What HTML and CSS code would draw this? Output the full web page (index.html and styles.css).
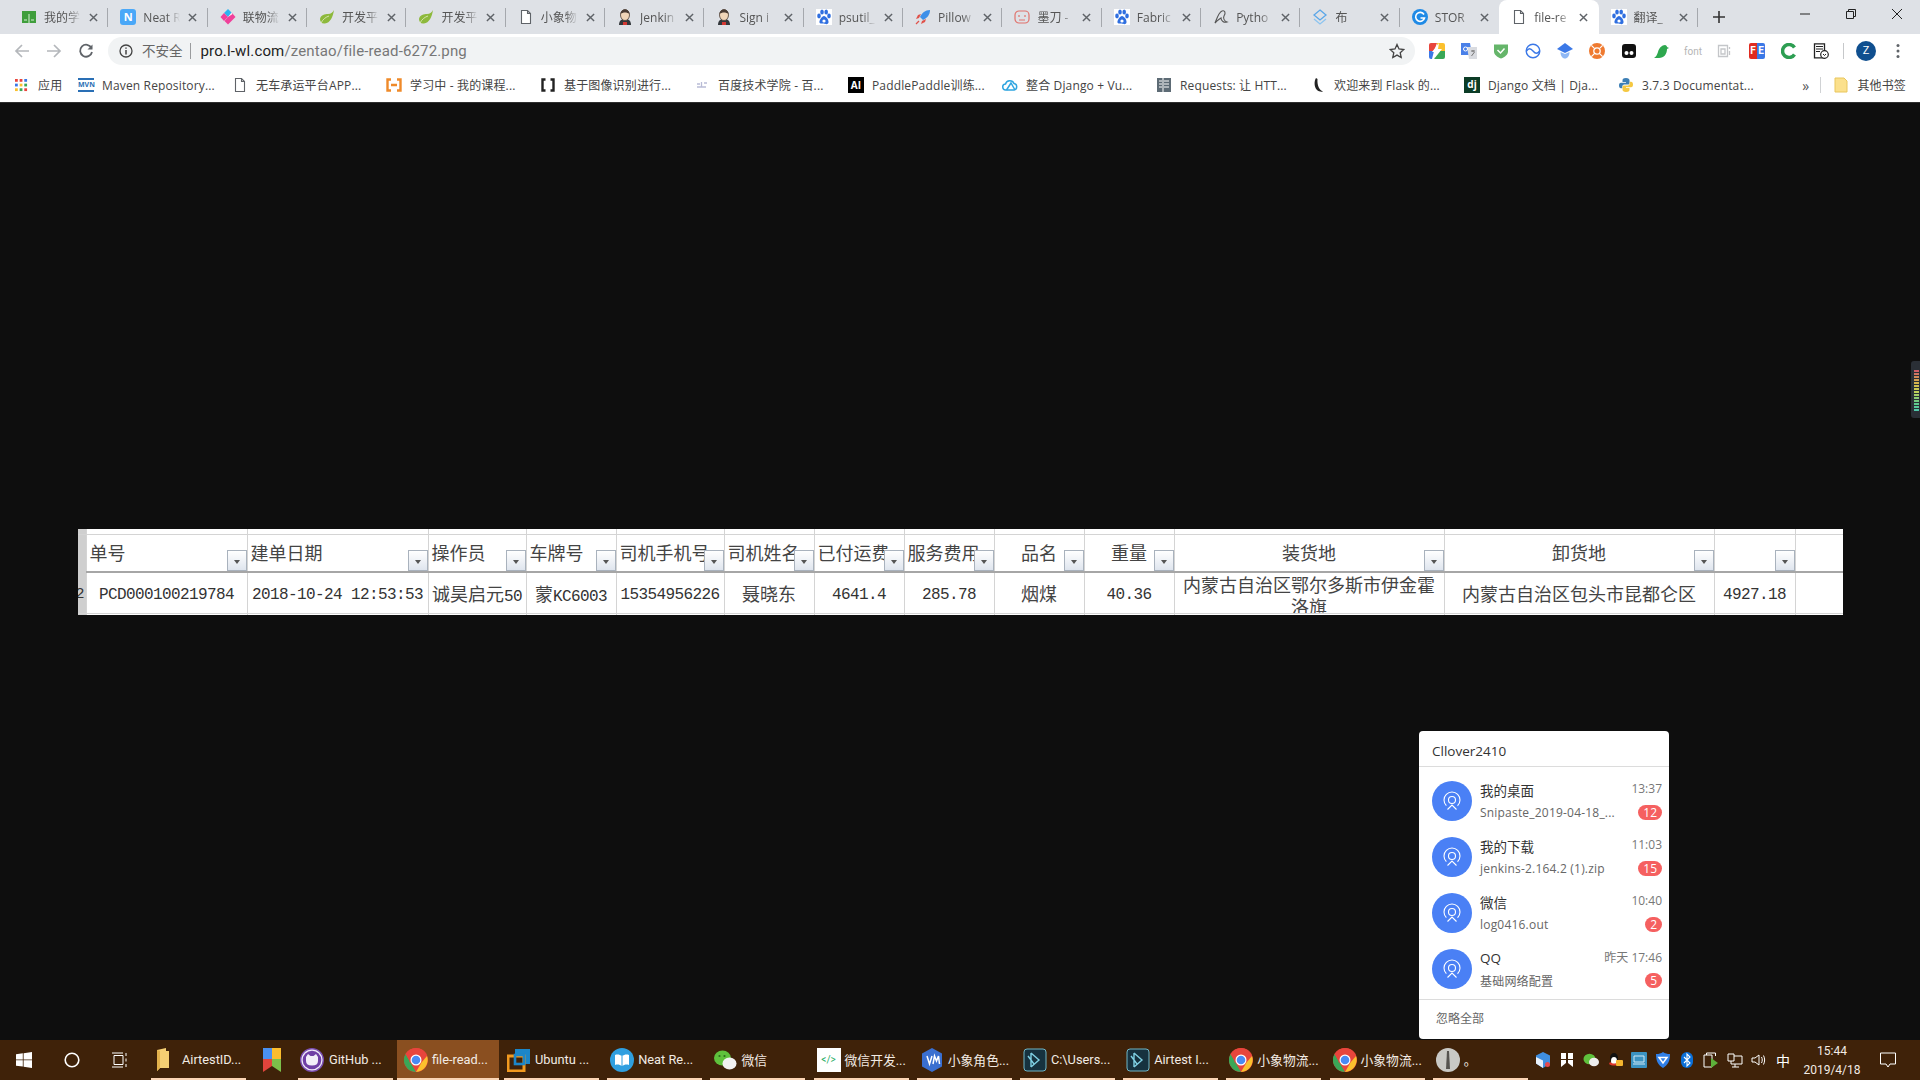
FILE: index.html
```html
<!DOCTYPE html>
<html lang="zh-CN">
<head>
    <meta charset="UTF-8">
    <title>file-read-6272.png</title>
    <link rel="stylesheet" href="styles.css">
</head>
<body>
    <svg class="defs" width="0" height="0">
        <defs>
            <symbol id="i-page" viewBox="0 0 16 16"><path d="M3.500 1.500h6l3 3v10h-9z M9.500 1.500v3h3" fill="#fff" stroke="#5f6368" stroke-width="1.100"/></symbol>
            <symbol id="i-close" viewBox="0 0 10 10"><path d="M1 1l8 8M9 1l-8 8" stroke="#5f6368" stroke-width="1.600" fill="none"/></symbol>
            <symbol id="i-paw" viewBox="0 0 16 16"><rect width="16" height="16" fill="#fff"/><ellipse cx="3" cy="7" rx="1.800" ry="2.400" fill="#2f6fe0"/><ellipse cx="6" cy="3" rx="1.800" ry="2.500" fill="#2f6fe0"/><ellipse cx="10.200" cy="3" rx="1.800" ry="2.500" fill="#2f6fe0"/><ellipse cx="13" cy="7" rx="1.800" ry="2.400" fill="#2f6fe0"/><path d="M8 7c2 0 5 4 4.500 6.500S9 15 8 14.500 4 15.500 3.500 13.500 6 7 8 7z" fill="#2f6fe0"/><circle cx="8" cy="12" r="1.600" fill="#fff"/></symbol>
            <symbol id="i-leaf" viewBox="0 0 16 16"><path d="M15 1C14 8 11 14 6 14.500 3 15 1 13 1 10 1.500 6 6 5 9 5c3 0 5-2 6-4z" fill="#8db93c"/><path d="M2 14c2-4 5-6 8-7" stroke="#e4edc8" stroke-width=".8" fill="none"/></symbol>
            <symbol id="i-jenkins" viewBox="0 0 16 16"><path d="M2 16c0-4 2-6 6-6s6 2 6 6z" fill="#33373b"/><ellipse cx="8" cy="6" rx="4.500" ry="5.500" fill="#f0d5b8" stroke="#4a3c34" stroke-width=".8"/><path d="M3.500 5C4 1.500 6 .5 8 .5s4 1 4.500 4.500C10 3 6 3 3.500 5z" fill="#4a3c34"/><path d="M6 13h4v3H6z" fill="#d33833"/></symbol>
            <symbol id="i-chrome" viewBox="0 0 24 24"><circle cx="12" cy="12" r="12" fill="#e8453c"/><path d="M12 24A12 12 0 0 1 1.600 6L7 15.500 12 24z" fill="#3aa757"/><path d="M12 24l5.500-9.500L23 8a12 12 0 0 1-11 16z" fill="#fbc02d"/><path d="M23 8H12a4 4 0 0 0-5 7.500L1.600 6A12 12 0 0 1 12 0a12 12 0 0 1 11 8z" fill="#e8453c"/><circle cx="12" cy="12" r="5.500" fill="#fff"/><circle cx="12" cy="12" r="4.300" fill="#4a8af4"/></symbol>
            <symbol id="i-vs" viewBox="0 0 24 24"><rect x="1" y="1" width="22" height="22" rx="3" fill="#16323f" stroke="#6fb6c9"/><path d="M8 5l8 7-8 7M8 5v14M5 8l6 8" fill="none" stroke="#7fd0e3" stroke-width="1.400"/></symbol>
            <symbol id="i-feed" viewBox="0 0 24 24"><circle cx="12" cy="11" r="8" fill="none" stroke="#fff" stroke-width="1.100" stroke-dasharray="38 12.300" stroke-dashoffset="31.600"/><circle cx="12" cy="11" r="3.500" fill="none" stroke="#fff" stroke-width="1.100"/><path d="M7.500 20.500l4.500-4.500 4.500 4.500" fill="none" stroke="#fff" stroke-width="1.100"/></symbol>
        </defs>
    </svg>

    <div class="tabstrip">
        <div class="tab">
            <svg class="fav" viewBox="0 0 16 16"><path d="M1 2h14v12H1z" fill="#3f9e3c"/><path d="M8 5v9M3 11h3M10 11h3" stroke="#d8efd6" stroke-width="1"/></svg>
            <span class="tab-title">我的学</span>
            <svg class="tab-x"><use href="#i-close"/></svg>
        </div>
        <div class="tab">
            <span class="fav fav-n">N</span>
            <span class="tab-title">Neat R</span>
            <svg class="tab-x"><use href="#i-close"/></svg>
        </div>
        <div class="tab">
            <svg class="fav" viewBox="0 0 16 16"><path d="M8 0l3.500 3.500L8 8 4 4z" fill="#2bb5f0"/><path d="M0.500 8L4 4l4 4-4 4z" fill="#f0409a"/><path d="M8 8l4-4 3.500 4L8 15.500 4.500 12z" fill="#f0409a"/><path d="M8 8l3.500-4 1 1z" fill="#fff"/></svg>
            <span class="tab-title">联物流</span>
            <svg class="tab-x"><use href="#i-close"/></svg>
        </div>
        <div class="tab">
            <svg class="fav"><use href="#i-leaf"/></svg>
            <span class="tab-title">开发平</span>
            <svg class="tab-x"><use href="#i-close"/></svg>
        </div>
        <div class="tab">
            <svg class="fav"><use href="#i-leaf"/></svg>
            <span class="tab-title">开发平</span>
            <svg class="tab-x"><use href="#i-close"/></svg>
        </div>
        <div class="tab">
            <svg class="fav"><use href="#i-page"/></svg>
            <span class="tab-title">小象物</span>
            <svg class="tab-x"><use href="#i-close"/></svg>
        </div>
        <div class="tab">
            <svg class="fav"><use href="#i-jenkins"/></svg>
            <span class="tab-title">Jenkin</span>
            <svg class="tab-x"><use href="#i-close"/></svg>
        </div>
        <div class="tab">
            <svg class="fav"><use href="#i-jenkins"/></svg>
            <span class="tab-title">Sign i</span>
            <svg class="tab-x"><use href="#i-close"/></svg>
        </div>
        <div class="tab">
            <svg class="fav"><use href="#i-paw"/></svg>
            <span class="tab-title">psutil_</span>
            <svg class="tab-x"><use href="#i-close"/></svg>
        </div>
        <div class="tab">
            <svg class="fav" viewBox="0 0 16 16"><path d="M15 1c-5 0-8 3-10 7l3 3c4-2 7-5 7-10z" fill="#3d8fe8"/><path d="M4 9l-3 1 2-4 3-1zM7 12l-1 3 4-2 1-3z" fill="#e0524a"/><path d="M4 12l-3 3" stroke="#e0524a" stroke-width="1.200"/></svg>
            <span class="tab-title">Pillow</span>
            <svg class="tab-x"><use href="#i-close"/></svg>
        </div>
        <div class="tab">
            <svg class="fav" viewBox="0 0 16 16"><rect x="1" y="2" width="14" height="12" rx="4" fill="none" stroke="#e0726c" stroke-width="1.200"/><path d="M5 6v2M11 6v2M5 11h6" stroke="#e0726c" stroke-width="1.200"/></svg>
            <span class="tab-title">墨刀 -</span>
            <svg class="tab-x"><use href="#i-close"/></svg>
        </div>
        <div class="tab">
            <svg class="fav"><use href="#i-paw"/></svg>
            <span class="tab-title">Fabric</span>
            <svg class="tab-x"><use href="#i-close"/></svg>
        </div>
        <div class="tab">
            <svg class="fav" viewBox="0 0 16 16"><path d="M2 14C4 9 6 3 9 2c3-1 4 2 2 5-1 2 0 5 3 6-3 1-6-1-6-4-2 1-4 3-6 5z" fill="none" stroke="#555" stroke-width="1.100"/></svg>
            <span class="tab-title">Pytho</span>
            <svg class="tab-x"><use href="#i-close"/></svg>
        </div>
        <div class="tab">
            <svg class="fav" viewBox="0 0 16 16"><path d="M8 1l6 5-6 5-6-5z" fill="none" stroke="#5aa6e8" stroke-width="1.300"/><path d="M2 10l6 5 6-5" fill="none" stroke="#8cc4f0" stroke-width="1.300"/></svg>
            <span class="tab-title">布</span>
            <svg class="tab-x"><use href="#i-close"/></svg>
        </div>
        <div class="tab tab-before-active">
            <svg class="fav" viewBox="0 0 16 16"><circle cx="8" cy="8" r="8" fill="#1f8ae6"/><path d="M12 5.500A4.500 4.500 0 1 0 12.500 9H8.500" fill="none" stroke="#fff" stroke-width="1.600"/></svg>
            <span class="tab-title">STOR</span>
            <svg class="tab-x"><use href="#i-close"/></svg>
        </div>
        <div class="tab tab-active">
            <svg class="fav"><use href="#i-page"/></svg>
            <span class="tab-title">file-re</span>
            <svg class="tab-x"><use href="#i-close"/></svg>
        </div>
        <div class="tab">
            <svg class="fav"><use href="#i-paw"/></svg>
            <span class="tab-title">翻译_</span>
            <svg class="tab-x"><use href="#i-close"/></svg>
        </div>
        <svg class="newtab" viewBox="0 0 12 12"><path d="M6 0v12M0 6h12" stroke="#333" stroke-width="1.600"/></svg>
        <div class="winctl">
            <div class="winbtn"><svg viewBox="0 0 12 12"><path d="M1 6h10" stroke="#222" stroke-width="1"/></svg></div>
            <div class="winbtn"><svg viewBox="0 0 12 12"><path d="M1.500 3.500h7v7h-7zM3.500 3.500v-2h7v7h-2" fill="none" stroke="#222" stroke-width="1"/></svg></div>
            <div class="winbtn"><svg viewBox="0 0 12 12"><path d="M1 1l10 10M11 1L1 11" stroke="#222" stroke-width="1"/></svg></div>
        </div>
    </div>

    <div class="toolbar">
        <svg class="navbtn" viewBox="0 0 16 16"><path d="M15 8H2M8 2L2 8l6 6" fill="none" stroke="#b4b7bb" stroke-width="1.700"/></svg>
        <svg class="navbtn" viewBox="0 0 16 16"><path d="M1 8h13M8 2l6 6-6 6" fill="none" stroke="#b4b7bb" stroke-width="1.700"/></svg>
        <svg class="navbtn" viewBox="0 0 16 16"><path d="M13.500 5A6 6 0 1 0 14 9" fill="none" stroke="#5f6368" stroke-width="1.800"/><path d="M14.500 1.500v5h-5z" fill="#5f6368"/></svg>
        <div class="omnibox">
            <svg class="omni-info" viewBox="0 0 14 14"><circle cx="7" cy="7" r="6" fill="none" stroke="#444" stroke-width="1.300"/><path d="M7 6v4.500M7 3.500v1.300" stroke="#444" stroke-width="1.500"/></svg>
            <span class="omni-warn">不安全</span>
            <span class="omni-url"><b>pro.l-wl.com</b>/zentao/file-read-6272.png</span>
            <svg class="omni-star" viewBox="0 0 16 16"><path d="M8 1.500l2 4.500 4.800.5-3.600 3.200 1 4.800L8 12.100 3.800 14.500l1-4.800L1.200 6.500 6 6z" fill="none" stroke="#444" stroke-width="1.300"/></svg>
        </div>
        <div class="ext"><svg viewBox="0 0 16 16"><path d="M0 2a2 2 0 0 1 2-2h6L5 8H0z" fill="#e8453c"/><path d="M8 0h6a2 2 0 0 1 2 2v6h-7z" fill="#fbc02d"/><path d="M0 8h5l-2 8H2a2 2 0 0 1-2-2z" fill="#3b78e7"/><path d="M9 8h7v6a2 2 0 0 1-2 2H5z" fill="#3aa757"/><path d="M10 0L3 9h4l-2 7 8-10H9z" fill="#fff"/></svg></div>
        <div class="ext"><svg viewBox="0 0 16 16"><path d="M0 0h9l2 12H0z" fill="#4a80e8"/><path d="M6 4h10v12H8z" fill="#d9dbe0"/><circle cx="4.500" cy="6" r="2" fill="none" stroke="#fff"/><path d="M10 8h4M12 7v2M10.500 13l3-4" stroke="#777"/></svg></div>
        <div class="ext"><svg viewBox="0 0 16 16"><path d="M1 1.500h14v7c0 3-3 5.500-7 7-4-1.500-7-4-7-7z" fill="#65b56a"/><path d="M4.500 7l3 3 4-4.500" fill="none" stroke="#fff" stroke-width="1.500"/></svg></div>
        <div class="ext"><svg viewBox="0 0 16 16"><circle cx="8" cy="8" r="6.800" fill="none" stroke="#3b78e7" stroke-width="1.400"/><path d="M1.500 8c2-3 4-3 6.500 0s4.500 3 6.500 0" fill="none" stroke="#3b78e7" stroke-width="1.400"/></svg></div>
        <div class="ext"><svg viewBox="0 0 16 16"><path d="M8 0l8 6-8 4-8-4z" fill="#3b78e7"/><path d="M3.500 9c0 4 2 6.500 4.500 6.500s4.500-2.500 4.500-6.500L8 11z" fill="#8fb8f5"/></svg></div>
        <div class="ext"><svg viewBox="0 0 16 16"><circle cx="8" cy="8" r="8" fill="#ef7a30"/><circle cx="8" cy="8" r="3.200" fill="none" stroke="#fff" stroke-width="1.300"/><path d="M8 0v4M8 12v4M0 8h4M12 8h4" stroke="#fff" stroke-width="1.200" transform="rotate(45 8 8)"/></svg></div>
        <div class="ext"><svg viewBox="0 0 16 16"><rect x="1" y="1" width="14" height="14" rx="3" fill="#111"/><circle cx="5.500" cy="10" r="2" fill="#fff"/><circle cx="10.500" cy="10" r="2" fill="#fff"/></svg></div>
        <div class="ext"><svg viewBox="0 0 16 16"><path d="M1 15c2-1 3-3 4-6 1-4 4-7 7-7 1 0 2 1 2 2l2 1-2 1c0 5-3 9-8 9z" fill="#2ea84f"/></svg></div>
        <div class="ext ext-font">font</div>
        <div class="ext"><svg viewBox="0 0 16 16"><path d="M1.500 2.500h9v11h-9zM4 6h4v5H4zM12.500 4v2M12.500 8v4" fill="none" stroke="#c4c6c9" stroke-width="1.300"/></svg></div>
        <div class="ext"><span class="ext-fe"><i>F</i><i>E</i></span></div>
        <div class="ext"><svg viewBox="0 0 16 16"><path d="M13.500 4.500A6.500 6.500 0 1 0 13.500 11.500" fill="none" stroke="#2d9e52" stroke-width="3.500"/></svg></div>
        <div class="ext"><svg viewBox="0 0 16 16"><path d="M1.500.8h10v14h-10z" fill="#fff" stroke="#222" stroke-width="1.300"/><path d="M3 3.500h7M3 6h7M3 8.500h4" stroke="#222"/><circle cx="11.500" cy="11.500" r="3.800" fill="#fff" stroke="#222" stroke-width="1.200"/><path d="M10 11l1.500 1.500L13 11" fill="none" stroke="#222"/></svg></div>
        <span class="tool-sep"></span>
        <span class="profile">Z</span>
        <svg class="kebab" viewBox="0 0 4 16"><circle cx="2" cy="2.500" r="1.500"/><circle cx="2" cy="8" r="1.500"/><circle cx="2" cy="13.500" r="1.500"/></svg>
    </div>

    <div class="bookmarks">
        <div class="bm bm-apps">
            <svg class="fav" viewBox="0 0 14 14"><g><rect width="3" height="3" fill="#e8453c"/><rect x="5" width="3" height="3" fill="#e8453c"/><rect x="10" width="3" height="3" fill="#3b78e7"/><rect y="5" width="3" height="3" fill="#3b78e7"/><rect x="5" y="5" width="3" height="3" fill="#fbc02d"/><rect x="10" y="5" width="3" height="3" fill="#3aa757"/><rect y="10" width="3" height="3" fill="#fbc02d"/><rect x="5" y="10" width="3" height="3" fill="#3aa757"/><rect x="10" y="10" width="3" height="3" fill="#e8453c"/></g></svg>
            <span>应用</span>
        </div>
        <div class="bm"><span class="fav fav-mvn">MVN</span><span>Maven Repository...</span></div>
        <div class="bm"><svg class="fav"><use href="#i-page"/></svg><span>无车承运平台APP...</span></div>
        <div class="bm"><svg class="fav" viewBox="0 0 16 16"><path d="M5 2.500H1.500v11H5M11 2.500h3.500v11H11M5 8h6" fill="none" stroke="#ef8a2a" stroke-width="2.400"/></svg><span>学习中 - 我的课程...</span></div>
        <div class="bm"><svg class="fav" viewBox="0 0 16 16"><path d="M5.500 2.500H2.500v11h3M10.500 2.500h3v11h-3" fill="none" stroke="#222" stroke-width="2.400"/></svg><span>基于图像识别进行...</span></div>
        <div class="bm"><svg class="fav" viewBox="0 0 16 16"><path d="M3 7h3M7.500 5v5M10 6h3M3 10h9" stroke="#b9bcd6" stroke-width="1.300"/></svg><span>百度技术学院 - 百...</span></div>
        <div class="bm"><span class="fav fav-ai">AI</span><span>PaddlePaddle训练...</span></div>
        <div class="bm"><svg class="fav" viewBox="0 0 16 16"><path d="M4 13a3 3 0 0 1-.5-6A4.500 4.500 0 0 1 12 6.500 3.300 3.300 0 0 1 12 13z" fill="none" stroke="#2fa5e0" stroke-width="1.500"/><path d="M4.500 13L9 6l4 7" fill="none" stroke="#2fa5e0" stroke-width="1.500"/></svg><span>整合 Django + Vu...</span></div>
        <div class="bm"><svg class="fav" viewBox="0 0 16 16"><rect x="1" y="1" width="14" height="14" fill="#5d6b75"/><path d="M3 4h3M3 7h3M3 10h3M8 4h5M8 7h5M8 10h5M7 1v14" stroke="#fff"/></svg><span>Requests: 让 HTT...</span></div>
        <div class="bm"><svg class="fav" viewBox="0 0 16 16"><path d="M6 1C4 4 4 10 7 13c1.500 1.500 4 2 6 1.500C9 13 7 8 7.500 2z" fill="#222"/></svg><span>欢迎来到 Flask 的...</span></div>
        <div class="bm"><span class="fav fav-dj">dj</span><span>Django 文档 | Dja...</span></div>
        <div class="bm"><svg class="fav" viewBox="0 0 16 16"><path d="M8 1C5 1 4.500 2 4.500 3.500V5H8v.7H3C1.500 5.700 1 7 1 8.500s.6 2.800 2 2.800h1.300V9.500C4.300 8 5.500 7.500 7 7.500h3c1 0 1.500-.7 1.500-1.500V3.500C11.500 2 10.500 1 8 1z" fill="#3d7fb5"/><path d="M8 15c3 0 3.500-1 3.500-2.500V11H8v-.7h5c1.500 0 2-1.300 2-2.800s-.6-2.800-2-2.800h-1.300v1.800c0 1.500-1.200 2-2.700 2H6c-1 0-1.500.7-1.500 1.500v2.500C4.500 14 5.500 15 8 15z" fill="#f5c842"/></svg><span>3.7.3 Documentat...</span></div>
        <div class="bm-right">
            <span class="bm-more">»</span>
            <span class="bm-sep"></span>
            <svg class="fav" viewBox="0 0 16 16"><path d="M2 1h9l3 3v11H2z" fill="#fbe08c" stroke="#e9c65c"/></svg>
            <span class="bm-other">其他书签</span>
        </div>
    </div>

    <div class="viewer">
        <div class="shot">
            <table class="sheet">
                <colgroup>
                    <col class="c-gut"><col class="c-no"><col class="c-date"><col class="c-op"><col class="c-car"><col class="c-tel"><col class="c-name"><col class="c-fee">
                    <col class="c-fee"><col class="c-good"><col class="c-good"><col class="c-addr"><col class="c-addr"><col class="c-sum"><col class="c-end">
                </colgroup>
                <tr class="r-top">
                    <td class="gut"></td><td></td><td></td><td></td><td></td><td></td><td></td><td></td><td></td><td></td><td></td><td></td><td></td><td></td><td></td>
                </tr>
                <tr class="r-head">
                    <td class="gut"></td>
                    <th>单号<span class="filter"></span></th>
                    <th>建单日期<span class="filter"></span></th>
                    <th>操作员<span class="filter"></span></th>
                    <th>车牌号<span class="filter"></span></th>
                    <th>司机手机号<span class="filter"></span></th>
                    <th>司机姓名<span class="filter"></span></th>
                    <th>已付运费<span class="filter"></span></th>
                    <th>服务费用<span class="filter"></span></th>
                    <th class="mid">品名<span class="filter"></span></th>
                    <th class="mid">重量<span class="filter"></span></th>
                    <th class="mid">装货地<span class="filter"></span></th>
                    <th class="mid">卸货地<span class="filter"></span></th>
                    <th><span class="filter"></span></th>
                    <th class="end"></th>
                </tr>
                <tr class="r-data">
                    <td class="gut gut-num">2</td>
                    <td>PCD000100219784</td>
                    <td>2018-10-24 12:53:53</td>
                    <td class="mix"><span class="cn">诚昊启元</span>50</td>
                    <td class="mix"><span class="cn">蒙</span>KC6003</td>
                    <td>15354956226</td>
                    <td class="cn">聂晓东</td>
                    <td>4641.4</td>
                    <td>285.78</td>
                    <td class="cn">烟煤</td>
                    <td>40.36</td>
                    <td class="cn addr"><div class="addr-wrap">内蒙古自治区鄂尔多斯市伊金霍洛旗</div></td>
                    <td class="cn">内蒙古自治区包头市昆都仑区</td>
                    <td>4927.18</td>
                    <td></td>
                </tr>
                <tr class="r-bot">
                    <td class="gut"></td><td></td><td></td><td></td><td></td><td></td><td></td><td></td><td></td><td></td><td></td><td></td><td></td><td></td><td></td>
                </tr>
            </table>
        </div>

        <div class="meter"><div class="meter-bars"></div></div>

        <div class="notice">
            <div class="notice-head">Cllover2410</div>
            <div class="notice-list">
                <div class="notice-row">
                    <div class="avatar"><svg><use href="#i-feed"/></svg></div>
                    <div class="notice-body">
                        <div class="notice-line"><span class="n-name">我的桌面</span><span class="n-time">13:37</span></div>
                        <div class="notice-line"><span class="n-sub">Snipaste_2019-04-18_...</span><span class="n-badge">12</span></div>
                    </div>
                </div>
                <div class="notice-row">
                    <div class="avatar"><svg><use href="#i-feed"/></svg></div>
                    <div class="notice-body">
                        <div class="notice-line"><span class="n-name">我的下载</span><span class="n-time">11:03</span></div>
                        <div class="notice-line"><span class="n-sub">jenkins-2.164.2 (1).zip</span><span class="n-badge">15</span></div>
                    </div>
                </div>
                <div class="notice-row">
                    <div class="avatar"><svg><use href="#i-feed"/></svg></div>
                    <div class="notice-body">
                        <div class="notice-line"><span class="n-name">微信</span><span class="n-time">10:40</span></div>
                        <div class="notice-line"><span class="n-sub">log0416.out</span><span class="n-badge">2</span></div>
                    </div>
                </div>
                <div class="notice-row">
                    <div class="avatar"><svg><use href="#i-feed"/></svg></div>
                    <div class="notice-body">
                        <div class="notice-line"><span class="n-name">QQ</span><span class="n-time">昨天 17:46</span></div>
                        <div class="notice-line"><span class="n-sub">基础网络配置</span><span class="n-badge">5</span></div>
                    </div>
                </div>
            </div>
            <div class="notice-foot">忽略全部</div>
        </div>
    </div>

    <div class="taskbar">
        <div class="sysbtn"><svg class="ico-win" viewBox="0 0 16 16"><path d="M0 2.300L6.800 1.300v6.200H0zM7.600 1.200L16 0v7.500H7.600zM0 8.300h6.800v6.300L0 13.700zM7.600 8.300H16V16l-8.400-1.200z" fill="#fff"/></svg></div>
        <div class="sysbtn"><svg class="ico-win" viewBox="0 0 16 16"><circle cx="8" cy="8" r="6.800" fill="none" stroke="#fff" stroke-width="1.600"/></svg></div>
        <div class="sysbtn"><svg class="ico-win" viewBox="0 0 16 16"><path d="M2 3.500h9v9H2zM0 1h11M0 15h11M14 1v3M14 6.500v3M14 12v3" fill="none" stroke="#fff" stroke-width="1"/></svg></div>
        <div class="task task-first">
            <svg class="task-ico" viewBox="0 0 16 24"><path d="M2 2l9-2v3h3v17H5l-3 3z" fill="#f5cf73"/><path d="M2 2v21l3-3V3z" fill="#e3b24c"/></svg>
            <span>AirtestID...</span>
        </div>
        <div class="task task-icon-only">
            <svg class="task-ico" viewBox="0 0 18 24"><rect width="9" height="11" fill="#4a90f0"/><rect x="9" width="9" height="11" fill="#fbbc2d"/><path d="M0 11h9v7l-9 6z" fill="#e0443c"/><path d="M9 11h9v13l-9-6z" fill="#7cc04a"/></svg>
        </div>
        <div class="task task-tight">
            <svg class="task-ico" viewBox="0 0 24 24"><circle cx="12" cy="12" r="11.300" fill="#efe9f7" stroke="#7a4eb0" stroke-width="1.400"/><circle cx="12" cy="12" r="9.300" fill="#6f3fa5"/><path d="M6 9l2-3 2.500 2h3L16 6l2 3v4c0 3-2 4.500-6 4.500S6 16 6 13z" fill="#f2eef8"/></svg>
            <span>GitHub ...</span>
        </div>
        <div class="task task-active">
            <svg class="task-ico"><use href="#i-chrome"/></svg>
            <span>file-read...</span>
        </div>
        <div class="task">
            <svg class="task-ico" viewBox="0 0 24 24"><path d="M8 1h15v15h-6V7H8z" fill="#1c86c8"/><path d="M1 8h16v15H1z" fill="none" stroke="#f29a1f" stroke-width="3"/><rect x="8" y="7" width="9" height="9" fill="none" stroke="#1c86c8" stroke-width="2.600"/></svg>
            <span>Ubuntu ...</span>
        </div>
        <div class="task">
            <svg class="task-ico" viewBox="0 0 24 24"><circle cx="12" cy="12" r="12" fill="#2f9fe0"/><path d="M5 7c3-1 5 0 7 1 2-1 4-2 7-1v10c-3-1-5 0-7 1-2-1-4-2-7-1z" fill="#fff"/><path d="M12 8v10" stroke="#2f9fe0"/></svg>
            <span>Neat Re...</span>
        </div>
        <div class="task">
            <svg class="task-ico" viewBox="0 0 24 24"><ellipse cx="9.500" cy="10" rx="8.500" ry="7.500" fill="#5fc13c"/><ellipse cx="16.500" cy="15.500" rx="7" ry="6" fill="#f2f2f2"/><circle cx="6.500" cy="8" r="1.100" fill="#2d6b1c"/><circle cx="11.500" cy="8" r="1.100" fill="#2d6b1c"/></svg>
            <span>微信</span>
        </div>
        <div class="task">
            <span class="task-dev">&lt;/&gt;</span>
            <span>微信开发...</span>
        </div>
        <div class="task">
            <svg class="task-ico" viewBox="0 0 24 24"><path d="M12 0l10 5.500v13L12 24 2 18.500v-13z" fill="#3a6fd0"/><path d="M7 8l2.500 8L12 8M13 16l1.500-8 2 5 2-5 1 8" fill="none" stroke="#fff" stroke-width="1.500"/></svg>
            <span>小象角色...</span>
        </div>
        <div class="task">
            <svg class="task-ico"><use href="#i-vs"/></svg>
            <span>C:\Users...</span>
        </div>
        <div class="task">
            <svg class="task-ico"><use href="#i-vs"/></svg>
            <span>Airtest I...</span>
        </div>
        <div class="task">
            <svg class="task-ico"><use href="#i-chrome"/></svg>
            <span>小象物流...</span>
        </div>
        <div class="task">
            <svg class="task-ico"><use href="#i-chrome"/></svg>
            <span>小象物流...</span>
        </div>
        <div class="task task-last">
            <svg class="task-ico" viewBox="0 0 24 24"><circle cx="12" cy="12" r="12" fill="#c9c9c5"/><path d="M11 3h2l1 18h-4z" fill="#55534f"/></svg>
            <span>。</span>
        </div>
        <div class="tray">
            <div class="tray-ico"><svg viewBox="0 0 16 16"><path d="M8 0l7 3.500v8L8 16 1 11.500v-8z" fill="#3f8ee0"/><path d="M1 5l7 3.500V16l-7-4.500z" fill="#e8f0fa"/><circle cx="12.500" cy="12.500" r="2.500" fill="#e5484d"/></svg></div>
            <div class="tray-ico"><svg viewBox="0 0 16 16"><path d="M2 1h5v6H2zM9 1h5v6H9zM2 8h5v3l-5 4zM9 8h5v7l-5-4z" fill="#fff"/></svg></div>
            <div class="tray-ico"><svg viewBox="0 0 16 16"><ellipse cx="6.500" cy="7" rx="6" ry="5.300" fill="#5fc13c"/><ellipse cx="11" cy="10" rx="5" ry="4.300" fill="#eee"/></svg></div>
            <div class="tray-ico"><svg viewBox="0 0 16 16"><ellipse cx="7" cy="6" rx="4" ry="5" fill="#111"/><ellipse cx="7" cy="9" rx="3" ry="4" fill="#fff"/><path d="M3 10c3 2 5 2 8 0l1 2c-3 2-7 2-10 0z" fill="#e0352b"/><rect x="9" y="8" width="7" height="6" rx="1" fill="#f5b52e"/></svg></div>
            <div class="tray-ico"><svg viewBox="0 0 16 16"><rect width="16" height="16" rx="1" fill="#3b93c2"/><path d="M3 4h10v6H3zM2 12h12" fill="none" stroke="#cfe8f5"/></svg></div>
            <div class="tray-ico"><svg viewBox="0 0 16 16"><path d="M8 0c2 1.500 4 2 7 2 0 7-2 11-7 14C3 13 1 9 1 2c3 0 5-.5 7-2z" fill="#2f7fe8"/><path d="M4 5.500h8L8 11z" fill="none" stroke="#fff" stroke-width="1.500"/></svg></div>
            <div class="tray-ico"><svg viewBox="0 0 16 16"><rect x="2" width="12" height="16" rx="6" fill="#0a6fd8"/><path d="M5 5l6 6-3 3V2l3 3-6 6" fill="none" stroke="#fff" stroke-width="1.100"/></svg></div>
            <div class="tray-ico"><svg viewBox="0 0 16 16"><path d="M1 3h8v12H1zM3.500 3V1h9v3" fill="none" stroke="#fff"/><path d="M8 6l7 5-7 5z" fill="#5eb13a"/></svg></div>
            <div class="tray-ico"><svg viewBox="0 0 16 16"><path d="M1 2h6v7H1zM7 4h8v8H4v-3M8 12v3M5 15h7" fill="none" stroke="#fff"/></svg></div>
            <div class="tray-ico"><svg viewBox="0 0 16 16"><path d="M1 6h3l4-3v10l-4-3H1zM10.500 5c1 2 1 4 0 6M12.500 3.500c1.500 3 1.500 6 0 9" fill="none" stroke="#fff"/></svg></div>
            <div class="tray-ime">中</div>
            <div class="clock"><div>15:44</div><div>2019/4/18</div></div>
            <div class="action-center"><svg viewBox="0 0 16 16"><path d="M.5 1h15v11H10l-2 3-2-3H.5z" fill="none" stroke="#fff"/></svg></div>
        </div>
    </div>
</body>
</html>
```

FILE: styles.css
```css
* {
    box-sizing: border-box;
}

html, body {
    height: 100%;
}

body {
    margin: 0;
    display: flex;
    flex-direction: column;
    overflow: hidden;
    background-color: #0e0e0e;
    font-family: Roboto, "Noto Sans CJK SC", sans-serif;
    color: #333;
}

.defs {
    position: absolute;
}

.fav {
    display: block;
    flex: none;
    width: 16px;
    height: 16px;
}

/* tab strip */
.tabstrip {
    display: flex;
    align-items: stretch;
    flex: none;
    height: 34px;
    padding-left: 9px;
    background-color: #dee1e6;
}

.tab {
    position: relative;
    display: flex;
    align-items: center;
    flex: none;
    width: 99.35px;
    padding-left: 12px;
    font-family: "Open Sans", "Noto Sans CJK SC", sans-serif;
    font-size: 12px;
    color: #555;
}

.tab::after {
    content: "";
    position: absolute;
    right: 0;
    top: 8px;
    width: 1px;
    height: 19px;
    background-color: #a5a8ad;
}

.tab-before-active::after,
.tab-active::after {
    display: none;
}

.tab-active {
    background-color: #fff;
    border-radius: 8px 8px 0 0;
}

.tab-title {
    flex: none;
    width: 37px;
    margin-left: 7px;
    overflow: hidden;
    white-space: nowrap;
    -webkit-mask-image: linear-gradient(to right, #000 65%, transparent 100%);
    mask-image: linear-gradient(to right, #000 65%, transparent 100%);
}

.tab-x {
    flex: none;
    width: 9px;
    height: 9px;
    margin-left: 8px;
}

.fav-n {
    border-radius: 3px;
    background-color: #4aa8f8;
    color: #fff;
    font-size: 11px;
    font-weight: 700;
    line-height: 16px;
    text-align: center;
}

.newtab {
    flex: none;
    align-self: center;
    width: 12px;
    height: 12px;
    margin-left: 15px;
}

.winctl {
    display: flex;
    margin-left: auto;
}

.winbtn {
    display: flex;
    justify-content: center;
    align-items: center;
    width: 46px;
    height: 28px;
}

.winbtn svg {
    width: 12px;
    height: 12px;
}

/* toolbar */
.toolbar {
    display: flex;
    align-items: center;
    flex: none;
    height: 34px;
    padding-left: 14px;
    background-color: #fff;
}

.navbtn {
    flex: none;
    width: 16px;
    height: 16px;
    margin-right: 16px;
}

.omnibox {
    display: flex;
    align-items: center;
    flex: none;
    width: 1307px;
    height: 28px;
    margin-left: -2px;
    padding-left: 11px;
    border-radius: 14px;
    background-color: #f1f3f4;
    font-size: 14px;
    color: #777;
}

.omni-info {
    flex: none;
    width: 14px;
    height: 14px;
}

.omni-warn {
    margin-left: 9px;
    padding-right: 7px;
    border-right: 1px solid #9a9c9e;
    font-size: 13.500px;
    line-height: 16px;
    color: #666;
}

.omni-url {
    margin-left: 10px;
    font-size: 15px;
    letter-spacing: 0.15px;
}

.omni-url b {
    font-weight: 400;
    color: #222;
}

.omni-star {
    flex: none;
    width: 16px;
    height: 16px;
    margin-left: auto;
    margin-right: 10px;
}

.ext {
    display: flex;
    justify-content: center;
    align-items: center;
    flex: none;
    width: 32px;
    height: 32px;
}

.toolbar > .omnibox + .ext {
    margin-left: 6px;
}

.ext svg {
    width: 16px;
    height: 16px;
}

.ext-font {
    font-size: 10px;
    color: #b5b5b5;
}

.ext-fe {
    display: flex;
    width: 16px;
    height: 16px;
    overflow: hidden;
    border-radius: 2px;
    font-size: 10px;
    font-weight: 700;
    line-height: 16px;
    color: #fff;
}

.ext-fe i {
    width: 8px;
    font-style: normal;
    text-align: center;
    background-color: #e02b20;
}

.ext-fe i + i {
    background-color: #3b78e7;
}

.tool-sep {
    flex: none;
    width: 1px;
    height: 16px;
    margin-left: 6px;
    background-color: #c6c8ca;
}

.profile {
    flex: none;
    width: 20px;
    height: 20px;
    margin-left: 12px;
    border-radius: 50%;
    background-color: #0f4f8f;
    color: #fff;
    font-size: 11px;
    line-height: 20px;
    text-align: center;
}

.kebab {
    flex: none;
    width: 4px;
    height: 16px;
    margin-left: 20px;
    fill: #5f6368;
}

/* bookmark bar */
.bookmarks {
    display: flex;
    align-items: center;
    flex: none;
    height: 35px;
    padding-left: 15px;
    background-color: #fff;
    border-bottom: 1px solid #2e2e2e;
    font-family: "Open Sans", "Noto Sans CJK SC", sans-serif;
    font-size: 12px;
    letter-spacing: 0.15px;
    color: #444;
}

.bm {
    display: flex;
    align-items: center;
    flex: none;
    gap: 8px;
    width: 154px;
    white-space: nowrap;
}

.bm-apps .fav {
    width: 13px;
    height: 13px;
}

.bm-apps {
    gap: 10px;
    width: 63px;
}

.fav-mvn {
    height: 14px;
    border-top: 2px solid #2a6fb5;
    border-bottom: 2px solid #2a6fb5;
    color: #2a6fb5;
    font-size: 7px;
    font-weight: 700;
    line-height: 10px;
    letter-spacing: 0;
    text-align: center;
}

.fav-ai {
    background-color: #000;
    color: #fff;
    font-size: 10px;
    font-weight: 700;
    line-height: 16px;
    text-align: center;
}

.fav-dj {
    background-color: #0c3c26;
    color: #fff;
    font-size: 10px;
    font-weight: 700;
    line-height: 15px;
    text-align: center;
}

.bm-right {
    display: flex;
    align-items: center;
    margin-left: auto;
}

.bm-more {
    font-size: 14px;
    color: #555;
}

.bm-sep {
    width: 1px;
    height: 16px;
    margin: 0 12px 0 11px;
    background-color: #d0d2d4;
}

.bm-other {
    margin-left: 8px;
    padding-right: 14px;
}

/* image viewer */
.viewer {
    position: relative;
    display: flex;
    justify-content: center;
    align-items: center;
    flex: 1;
    min-height: 0;
    padding-left: 1px;
    background-color: #0e0e0e;
}

.shot {
    width: 1765px;
    height: 86px;
    overflow: hidden;
    background-color: #fff;
}

.sheet {
    width: 1765px;
    table-layout: fixed;
    border-collapse: collapse;
    font-family: "Liberation Mono", "Noto Sans CJK SC", monospace;
    font-size: 16px;
    letter-spacing: -0.6px;
    color: #333;
}

.c-gut { width: 8px; }
.c-no { width: 161px; }
.c-date { width: 181px; }
.c-op { width: 98px; }
.c-car { width: 90px; }
.c-tel { width: 108px; }
.c-name { width: 90px; }
.c-fee { width: 90px; }
.c-good { width: 90px; }
.c-addr { width: 270px; }
.c-sum { width: 81px; }
.c-end { width: 48px; }

.sheet td, .sheet th {
    padding: 0;
    overflow: hidden;
    border-right: 1px solid #d4d4d4;
    white-space: nowrap;
}

.sheet td:last-child, .sheet th:last-child {
    border-right: none;
}

.r-top td {
    height: 6px;
    border-bottom: 1px solid #d4d4d4;
}

.r-head th {
    position: relative;
    height: 37px;
    padding: 0 0 1px 3px;
    border-bottom: 2px solid #a6a6a6;
    font-family: "Noto Sans CJK SC", sans-serif;
    font-size: 18px;
    font-weight: 400;
    letter-spacing: 0;
    text-align: left;
    color: #444;
}

.r-head th.mid {
    padding-left: 0;
    text-align: center;
}

.filter {
    position: absolute;
    right: 0;
    bottom: 0;
    width: 20px;
    height: 21px;
    border: 1px solid #a9b2bd;
    background: linear-gradient(#fff, #dfe5ee);
}

.filter::after {
    content: "";
    position: absolute;
    left: 6px;
    top: 9px;
    border: 3.500px solid transparent;
    border-top: 4px solid #555;
    border-bottom: none;
}

.sheet .r-data td {
    height: 41px;
    padding-top: 4px;
    border-bottom: 1px solid #d4d4d4;
    text-align: center;
}

.sheet .r-data .cn,
.sheet .r-data .mix {
    padding-top: 1px;
}

.sheet .r-data .addr {
    padding-top: 0;
    vertical-align: top;
}

.r-bot td {
    height: 2px;
}

.cn {
    font-family: "Noto Sans CJK SC", sans-serif;
    font-size: 18px;
    letter-spacing: 0;
    color: #444;
}

.addr-wrap {
    height: 40px;
    overflow: hidden;
    white-space: normal;
    line-height: 22px;
}

.gut {
    background-color: #cfcfcf;
}

.r-data .gut-num {
    font-size: 15px;
    text-align: left;
    text-indent: -4px;
}

.meter {
    position: absolute;
    right: 0;
    top: 258px;
    width: 9px;
    height: 57px;
    padding: 9px 1px 6px 3px;
    border-radius: 3px 0 0 3px;
    background-color: #2a2f36;
}

.meter-bars {
    height: 100%;
    background: linear-gradient(#d0566a, #d6b24c 30%, #c8d055 50%, #5ecb8e 80%, #4ec7b0);
    -webkit-mask-image: repeating-linear-gradient(#000 0 2px, transparent 2px 3px);
    mask-image: repeating-linear-gradient(#000 0 2px, transparent 2px 3px);
}

/* download notice */
.notice {
    position: absolute;
    left: 1419px;
    top: 628px;
    display: flex;
    flex-direction: column;
    width: 250px;
    height: 308px;
    border-radius: 4px;
    background-color: #fff;
    font-family: "Open Sans", "Noto Sans CJK SC", sans-serif;
}

.notice-head {
    flex: none;
    height: 36px;
    padding-left: 13px;
    border-bottom: 1px solid #dcdcdc;
    font-size: 13.500px;
    line-height: 40px;
    color: #333;
}

.notice-list {
    flex: none;
    height: 233px;
    padding-top: 6px;
    border-bottom: 1px solid #dcdcdc;
}

.notice-row {
    display: flex;
    align-items: center;
    height: 56px;
    padding: 0 7px 0 13px;
}

.avatar {
    flex: none;
    width: 40px;
    height: 40px;
    padding: 8px;
    border-radius: 50%;
    background-color: #4a80f5;
}

.avatar svg {
    display: block;
    width: 24px;
    height: 24px;
}

.notice-body {
    flex: 1;
    min-width: 0;
    margin-left: 8px;
}

.notice-line {
    display: flex;
    justify-content: space-between;
    align-items: center;
    height: 22px;
}

.n-name {
    font-size: 13.500px;
    color: #333;
}

.n-time {
    margin-top: -3px;
    font-size: 12px;
    color: #777;
}

.n-sub {
    margin-top: 1px;
    font-size: 12px;
    letter-spacing: 0.2px;
    color: #666;
}

.n-badge {
    min-width: 16px;
    height: 15px;
    padding: 0 5px;
    border-radius: 8px;
    background-color: #f56060;
    color: #fff;
    font-size: 12px;
    line-height: 15px;
    text-align: center;
}

.notice-foot {
    padding-left: 17px;
    font-size: 12px;
    line-height: 37px;
    color: #666;
}

/* taskbar */
.taskbar {
    display: flex;
    flex: none;
    height: 40px;
    background-color: #3f2209;
    font-size: 12.800px;
    color: #f2ebe4;
}

.sysbtn {
    display: flex;
    justify-content: center;
    align-items: center;
    flex: none;
    width: 48px;
}

.ico-win {
    width: 16px;
    height: 16px;
}

.task {
    position: relative;
    display: flex;
    align-items: center;
    flex: none;
    gap: 4px;
    width: 95px;
    margin-right: 8.200px;
    padding-left: 3px;
    white-space: nowrap;
}

.task span:last-child {
    margin-top: -2px;
}

.task-first {
    margin-left: 7px;
    margin-right: 4px;
    gap: 7px;
    padding-left: 0;
}

.task-tight {
    margin-right: 4px;
    padding-left: 2px;
    gap: 5px;
}

.task-icon-only {
    width: 44px;
    margin-right: 4px;
    padding-left: 13px;
}

.task-last {
    margin-right: 0;
}

.task::after {
    content: "";
    position: absolute;
    left: 0;
    right: 0;
    bottom: 0;
    height: 2px;
    background-color: #fbd5b5;
}

.task-icon-only::after {
    display: none;
}

.task-active {
    width: 102px;
    margin-right: 5px;
    padding-left: 7px;
    background-color: #8a4f20;
}

.task-ico {
    display: block;
    flex: none;
    width: 24px;
    height: 24px;
}

.task-icon-only .task-ico {
    width: 18px;
}

.task-dev {
    flex: none;
    width: 24px;
    height: 24px;
    background-color: #fff;
    color: #2aae67;
    font-size: 10px;
    line-height: 24px;
    text-align: center;
}

.tray {
    display: flex;
    align-items: center;
    flex: none;
    margin-left: auto;
    padding-right: 13px;
}

.tray-ico {
    display: flex;
    justify-content: center;
    flex: none;
    width: 24px;
}

.tray-ico svg {
    width: 16px;
    height: 16px;
}

.tray-ime {
    flex: none;
    width: 24px;
    font-size: 14px;
    text-align: center;
    color: #fff;
}

.clock {
    flex: none;
    width: 74px;
    padding-top: 1px;
    font-size: 12px;
    line-height: 19px;
    text-align: center;
    color: #f2ebe4;
}

.action-center {
    display: flex;
    justify-content: center;
    flex: none;
    width: 38px;
}

.action-center svg {
    width: 16px;
    height: 16px;
}
```
